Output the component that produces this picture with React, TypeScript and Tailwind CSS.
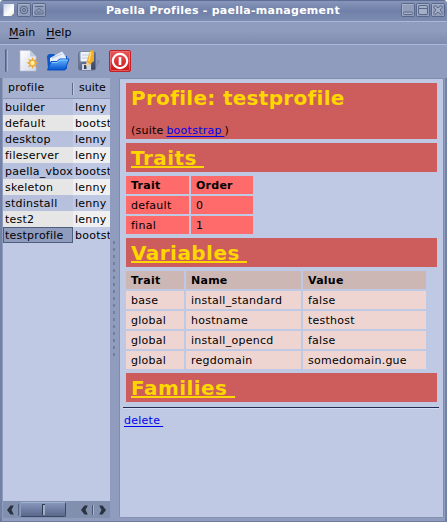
import type { ReactNode } from "react";

const profiles = [
  ["builder", "lenny"],
  ["default", "bootstrap"],
  ["desktop", "lenny"],
  ["fileserver", "lenny"],
  ["paella_vbox", "bootstrap"],
  ["skeleton", "lenny"],
  ["stdinstall", "lenny"],
  ["test2", "lenny"],
  ["testprofile", "bootstrap"],
];

const variables = [
  ["base", "install_standard", "false"],
  ["global", "hostname", "testhost"],
  ["global", "install_opencd", "false"],
  ["global", "regdomain", "somedomain.gue"],
];

function TitleButton({ children }: { children: ReactNode }) {
  return (
    <svg width="14" height="14" viewBox="0 0 14 14" fill="none" stroke="#59678a" className="block shrink-0">
      <rect x="0.5" y="0.5" width="13" height="13" rx="1" fill="#929db9" />
      <path d="M1.5 12V1.5H12" stroke="#a7b0c9" />
      {children}
    </svg>
  );
}

function TitleBar() {
  return (
    <div className="flex h-[21px] items-start border-t border-[#5f6e96] bg-linear-to-b from-[#8795b9] via-[#7080a8] to-[#7e8cb1] pt-[2px] pl-[3px] pr-[2px]">
      <svg width="12" height="14" viewBox="0 0 12 14" className="mr-[2px] block shrink-0">
        <defs>
          <linearGradient id="sheet" x1="0" y1="0" x2="1" y2="1">
            <stop stopColor="#c6d1e8" />
            <stop offset=".6" stopColor="#fff" />
            <stop offset="1" stopColor="#e5e4d8" />
          </linearGradient>
        </defs>
        <path d="M0.500 1H11V10L8 13H0.500Z" fill="url(#sheet)" />
        <path d="M8 13V10H11Z" fill="#fff8c8" />
      </svg>
      <div className="flex gap-[1px]">
        <TitleButton>
          <circle cx="7" cy="7" r="3.8" />
          <circle cx="7" cy="7" r="1.5" />
        </TitleButton>
        <TitleButton>
          <path d="M3 3.5H11M3 11V8.5L7 5.5L11 8.5V11ZM5 9H9" />
        </TitleButton>
      </div>
      <div className="h-4 flex-1 pl-[60px] text-[11px] leading-[15px] font-bold tracking-[0.26px] text-white">Paella Profiles - paella-management</div>
      <div className="flex gap-[1px]">
        <TitleButton>
          <rect x="2.5" y="9" width="9" height="2.5" rx="1" fill="#a6afc8" />
        </TitleButton>
        <TitleButton>
          <rect x="2.5" y="2.5" width="9" height="9" rx="1.5" fill="#a6afc8" />
          <path d="M2.5 5.5H11.5" />
        </TitleButton>
        <TitleButton>
          <path d="M2.5 4L4 2.5L7 5L10 2.5L11.5 4L9 7L11.5 10L10 11.5L7 9L4 11.5L2.5 10L5 7Z" fill="#a6afc8" />
        </TitleButton>
      </div>
    </div>
  );
}

function ToolBar() {
  return (
    <div className="flex h-[33px] items-start pt-[4px] pl-[5px]">
      <div className="h-[23px] w-[3px] rounded-sm border-l border-l-[#56627f] border-r border-r-[#aab5d4] bg-[#7683a6]" />
      <svg width="124" height="25" viewBox="0 0 124 25" className="ml-[8px] block">
        <defs>
          <linearGradient id="paper" x1="0" y1="0" x2="1" y2="1">
            <stop stopColor="#fff" />
            <stop offset="1" stopColor="#d2d7e7" />
          </linearGradient>
          <linearGradient id="folder" x1="0" y1="0" x2="0" y2="1">
            <stop stopColor="#65b5ff" />
            <stop offset="1" stopColor="#0754cf" />
          </linearGradient>
          <linearGradient id="disk" x1="0" y1="0" x2="1" y2="1">
            <stop stopColor="#8796b4" />
            <stop offset="1" stopColor="#343e5c" />
          </linearGradient>
          <linearGradient id="power" x1="0" y1="0" x2="0" y2="1">
            <stop stopColor="#ea5a5c" />
            <stop offset="1" stopColor="#c81418" />
          </linearGradient>
        </defs>
        <g>
          <path d="M4 1.500H14L20 7.500V22H4Z" fill="url(#paper)" stroke="#b2bbd1" strokeWidth=".6" />
          <path d="M14 1.500V7.500H20Z" fill="#c2cbdd" />
          <path d="M16.500 8L17.700 11.200L20.800 9.500L19.400 12.600L22.500 14L19.400 15.200L20.800 18.300L17.700 16.900L16.500 20L15.200 16.900L12.100 18.300L13.500 15.200L10.500 14L13.500 12.600L12.100 9.500L15.200 11.200Z" fill="#eda52c" />
          <circle cx="16.500" cy="14" r="2.200" fill="#fff3a1" />
        </g>
        <g>
          <path d="M31 7L33 5H38L40 7H51V20H32Z" fill="#0c58c8" />
          <path d="M34 9L46 2.500L50 8V14H34Z" fill="#e7efff" />
          <path d="M36 9L46 5" stroke="#b7c8e9" />
          <path d="M31.500 21L35 12.500H41L43.500 10H53L49 21Z" fill="url(#folder)" stroke="#0753c5" />
          <path d="M36 13.500H41.500L44 11H51.500" stroke="#8acbff" fill="none" />
        </g>
        <g>
          <path d="M81 10L84 12L80 19Z" fill="#7f8db0" />
          <rect x="62.500" y="3" width="17" height="18" rx="1.500" fill="url(#disk)" stroke="#66748f" />
          <rect x="64.500" y="3" width="13" height="9.500" fill="#eef2fa" />
          <path d="M66 6H76M66 9H76" stroke="#c0c9db" />
          <rect x="66" y="15" width="9" height="6" fill="#ced4e0" />
          <rect x="68" y="16" width="2.500" height="4" fill="#39435f" />
          <path d="M74 2L77.500 1L78 11L73.500 16.500L70.500 13Z" fill="#f5ad27" />
          <path d="M75 3L73 12" stroke="#ffe477" strokeWidth="1.300" />
          <path d="M70.500 12.500L74 15.500L70 17.500Z" fill="#f1d2a0" />
        </g>
        <g>
          <rect x="93.500" y="1.500" width="21" height="21" rx="1.500" fill="url(#power)" stroke="#c32127" />
          <rect x="94.500" y="2.500" width="19" height="19" rx="1" fill="none" stroke="#ee7777" strokeWidth=".7" />
          <circle cx="104" cy="12" r="7.200" fill="none" stroke="#fff" strokeWidth="2.200" />
          <path d="M104 8V16" stroke="#fff" strokeWidth="2.600" />
        </g>
      </svg>
    </div>
  );
}

function Arrow({ left }: { left?: boolean }) {
  return (
    <svg width="7" height="10" viewBox="0 0 7 10" className="block shrink-0">
      <path d={left ? "M3.500 0.500H6.800L4.500 5L6.800 9.500H3.500L0 5Z" : "M.2 .5H3.500L7 5L3.500 9.500H.2L2.500 5Z"} fill="#2c3140" />
    </svg>
  );
}

function ProfileList() {
  return (
    <div className="flex h-[440px] w-[107px] shrink-0 flex-col overflow-hidden bg-[#bfc9e4]">
      <div className="flex h-[21px] shrink-0 items-center border-b border-[#8995b3] bg-[#a6b1d0] pt-[1px] pl-[5px]">
        <div className="w-[64px]">profile</div>
        <div className="h-3 w-[2px] border-l border-[#5d6988] bg-[#bdc7e1]" />
        <div className="pl-[5px] tracking-normal">suite</div>
      </div>
      {profiles.map(([name, suite], i) => (
        <div key={name} className="flex h-4 shrink-0 leading-[18px]">
          <div className={`h-4 w-[70px] shrink-0 overflow-hidden whitespace-nowrap ${i === 8 ? "border border-[#505d7c] bg-[#909cbe] pl-[1px] leading-[16px]" : i % 2 ? "bg-[#e6e6e6] pl-[2px]" : "bg-[#b7c0dc] pl-[2px]"}`}>{name}</div>
          <div className={`h-4 flex-1 overflow-hidden pl-[2px] ${i % 2 ? "bg-[#f0f0f0]" : "bg-[#bfc9e4]"}`}>{suite}</div>
        </div>
      ))}
      <div className="mt-auto flex h-[17px] shrink-0 items-center bg-[#8290b0] pl-[4px]">
        <Arrow left />
        <div className="ml-[4px] h-3 w-px bg-[#566280]" />
        <div className="ml-px flex h-[15px] w-[46px] items-center justify-center rounded-xs border border-t-[#a1afd1] border-r-[#3c4864] border-b-[#3c4864] border-l-[#8998bd] bg-linear-to-b from-[#8796bb] to-[#59678a]">
          <div className="h-[11px] w-[3px] border-l border-t border-l-[#303b54] border-t-[#303b54] bg-[#a0aeca]" />
        </div>
        <div className="ml-[15px]"><Arrow left /></div>
        <div className="ml-[4px] h-[10px] w-[2px] border-l border-[#4d5974] bg-[#aab5d0]" />
        <div className="ml-[5px]"><Arrow /></div>
      </div>
    </div>
  );
}

function Heading({ children }: { children: ReactNode }) {
  return (
    <div className="h-[29px] bg-[#cd5c5c] pl-[5px] text-[20px] font-bold tracking-[0.45px] whitespace-pre text-[#ffd700]">
      <span className="inline-block h-[25px] border-b-2 border-[#ffd700] align-top leading-[30px]">{children}</span>
    </div>
  );
}

function Details() {
  const cell = "h-[18px] pl-[5px] pt-px leading-[18px]";
  return (
    <div className="h-[440px] w-[325px] shrink-0 rounded-xs border border-t-[#7f8cac] border-r-[#7f8cac] border-b-[#8792b2] border-l-[#7f8cac] bg-[#bfc9e4] pt-[4px] pl-[3px]">
      <div className="ml-[3px] w-[311px]">
        <div className="h-[56px] bg-[#cd5c5c] pl-[5px]">
          <div className="h-[39px] pt-[1px] text-[20px] leading-[28px] font-bold tracking-[0.3px] text-[#ffd700]">Profile: testprofile</div>
          <div className="leading-[17px] whitespace-pre [word-spacing:-1px]">(suite <span className="text-[#0000ee] underline underline-offset-[2px]">bootstrap </span>)</div>
        </div>
        <div className="mt-1"><Heading>{"Traits "}</Heading></div>
        <div className="mt-1 grid w-[127px] grid-cols-[63px_62px] gap-[2px]">
          {["Trait", "Order", "default", "0", "final", "1"].map((text, i) => (
            <div key={text} className={`${cell} bg-[#ff6a6a] ${i < 2 ? "font-bold" : ""}`}>{text}</div>
          ))}
        </div>
        <div className="mt-1"><Heading>{"Variables "}</Heading></div>
        <div className="mt-1 grid w-[300px] grid-cols-[58px_115px_123px] gap-[2px]">
          {["Trait", "Name", "Value"].map((text) => (
            <div key={text} className={`${cell} bg-[#cdb7b5] font-bold`}>{text}</div>
          ))}
          {variables.flat().map((text, i) => (
            <div key={i} className={`${cell} bg-[#eed5d2]`}>{text}</div>
          ))}
        </div>
        <div className="mt-1"><Heading>{"Families "}</Heading></div>
      </div>
      <div className="mt-[5px] h-[2px] w-[316px] border-t border-[#202c50] bg-[#d3dcf4]" />
      <div className="mt-[3px] pl-[1px] leading-[18px] whitespace-pre text-[#0000ee] underline underline-offset-[2px] [word-spacing:-0.8px]">delete </div>
    </div>
  );
}

export default function App() {
  return (
    <div className="h-[522px] w-[447px] overflow-hidden rounded-t-[4px] bg-[#909cbe] font-['DejaVu_Sans',sans-serif] text-[11px] tracking-[0.25px] text-black">
      <TitleBar />
      <div className="flex h-6 items-start gap-[11px] border-t border-b border-t-[#a9b7dc] border-b-[#a9b7dc] bg-linear-to-b from-[#909cbe] from-40% to-[#808cad] pt-[1px] pl-[9px] leading-[20px] tracking-normal">
        <div><span className="underline underline-offset-[2px]">M</span>ain</div>
        <div><span className="underline underline-offset-[2px]">H</span>elp</div>
      </div>
      <ToolBar />
      <div className="flex h-[440px] border-r-2 border-l-2 border-[#7381a5] pl-[1px]">
        <ProfileList />
        <div className="flex w-[9px] shrink-0 items-center pl-[3px]">
          <div className="flex flex-col gap-[4px]">
            {Array.from({ length: 17 }, (_, i) => <div key={i} className="h-[3px] w-[2px] bg-[#747f99]" />)}
          </div>
        </div>
        <Details />
      </div>
      <div className="h-[4px] border-x-2 border-b border-[#6e7ca1] bg-[#909cbe]" />
    </div>
  );
}
